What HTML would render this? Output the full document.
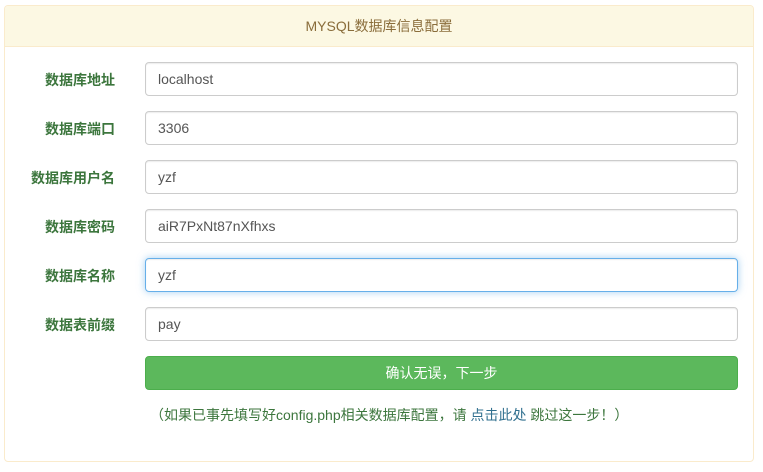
<!DOCTYPE html>
<html><head><meta charset="utf-8"><style>
body{margin:0;background:#fff;font-family:"Liberation Sans","Noto Sans CJK SC",sans-serif;font-size:14px;}
.panel{position:absolute;left:4px;top:5px;width:748px;height:455px;border:1px solid #faebcc;border-radius:4px;}
.hd{height:40px;background:#fcf8e3;border-bottom:1px solid #faebcc;color:#8a6d3b;text-align:center;line-height:40px;font-size:14px;border-radius:3px 3px 0 0;}
.lbl{position:absolute;right:648px;font-weight:bold;color:#3c763d;font-size:14px;width:120px;text-align:right;}
.in{position:absolute;left:145px;width:591px;height:32px;border:1px solid #ccc;border-radius:4px;box-shadow:inset 0 1px 1px rgba(0,0,0,.075);color:#555;line-height:32px;padding-left:12px;box-sizing:content-box;width:579px;}
.focus{border-color:#66afe9;box-shadow:inset 0 1px 1px rgba(0,0,0,.075),0 0 8px rgba(102,175,233,.6);}
.btn{position:absolute;left:145px;top:356px;width:591px;height:32px;background:#5cb85c;border:1px solid #4cae4c;border-radius:4px;color:#fff;text-align:center;line-height:32px;}
.note{position:absolute;left:150px;top:405px;color:#3c763d;font-size:14px;}
.note a{color:#31708f;text-decoration:none;}
</style></head><body>
<div class="panel"><div class="hd">MYSQL数据库信息配置</div></div>
<div class="lbl" style="top:70px">数据库地址</div><div class="in" style="top:62px">localhost</div>
<div class="lbl" style="top:119px">数据库端口</div><div class="in" style="top:111px">3306</div>
<div class="lbl" style="top:168px">数据库用户名</div><div class="in" style="top:160px">yzf</div>
<div class="lbl" style="top:217px">数据库密码</div><div class="in" style="top:209px">aiR7PxNt87nXfhxs</div>
<div class="lbl" style="top:266px">数据库名称</div><div class="in focus" style="top:258px">yzf</div>
<div class="lbl" style="top:315px">数据表前缀</div><div class="in" style="top:307px">pay</div>
<div class="btn">确认无误，下一步</div>
<div class="note">（如果已事先填写好config.php相关数据库配置，请 <a>点击此处</a> 跳过这一步！）</div>
</body></html>
